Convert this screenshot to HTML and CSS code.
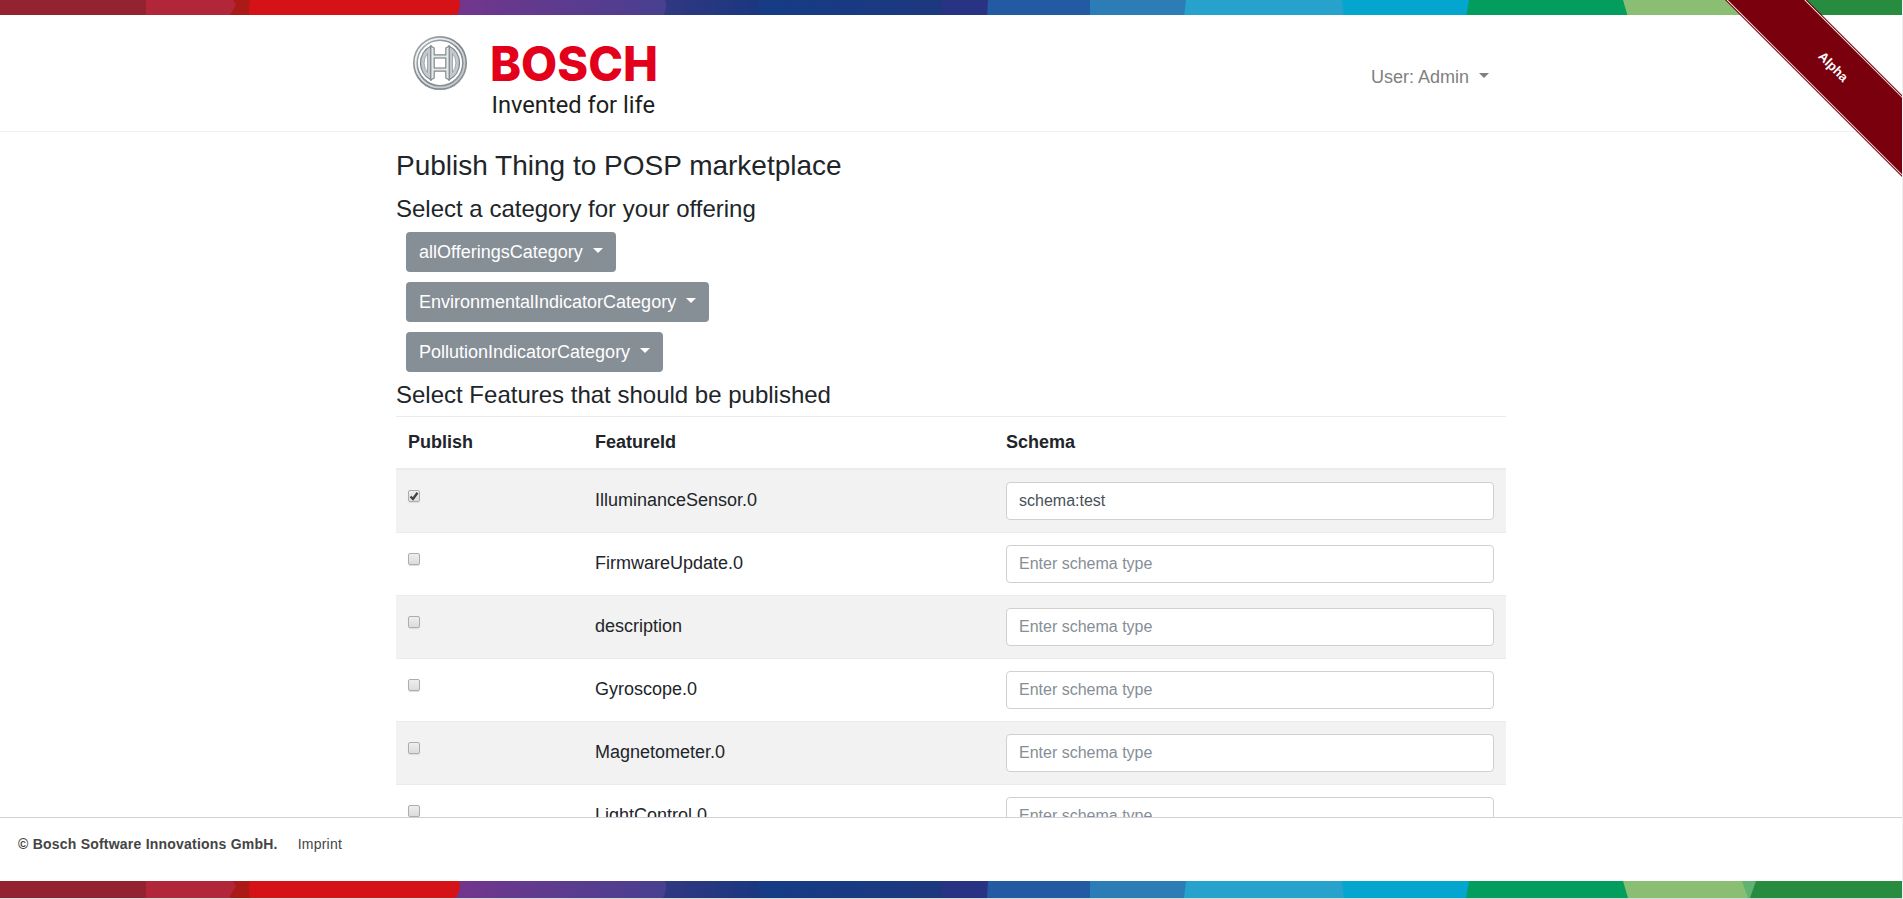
FILE: index.html
```html
<!DOCTYPE html>
<html lang="en">
<head>
<meta charset="utf-8">
<title>Publish Thing</title>
<link rel="stylesheet" href="styles.css">
</head>
<body>
<svg width="0" height="0" class="defs">
  <defs>
    <linearGradient id="violet"><stop offset="0" stop-color="#72368c"/><stop offset="1" stop-color="#474090"/></linearGradient>
    <linearGradient id="navy"><stop offset="0" stop-color="#303880"/><stop offset="1" stop-color="#193780"/></linearGradient>
    <linearGradient id="blue"><stop offset="0" stop-color="#153c85"/><stop offset="1" stop-color="#1d387f"/></linearGradient>
    <symbol id="stripe" viewBox="0 0 1903 17" preserveAspectRatio="none">
      <rect width="1903" height="17" fill="#942331"/>
      <rect x="146" width="100" height="17" fill="#b12739"/>
      <path d="M233 0L236 5L230 15V17H260V0Z" fill="#ac1a18"/>
      <rect x="455" width="215" height="17" fill="url(#violet)"/>
      <path d="M250 0H459Q462 6 456 17H250Q248 7 250 0Z" fill="#d51317"/>
      <path d="M665 0Q668 6 663 17H765V0Z" fill="url(#navy)"/>
      <path d="M759 0V10L762 17H942V0Z" fill="url(#blue)"/>
      <rect x="942" width="50" height="17" fill="#283383"/>
      <path d="M988 0L987 17H1095V0Z" fill="#225ba3"/>
      <rect x="1090" width="100" height="17" fill="#2c7db6"/>
      <path d="M1186 0L1184 17H1350V0Z" fill="#27a2cc"/>
      <path d="M1342 0L1344 17H1475V0Z" fill="#04a6d0"/>
      <path d="M1469 0L1466 17H1640V0Z" fill="#039e5d"/>
      <path d="M1623 0L1628 17H1760V0Z" fill="#8abf73"/>
      <path d="M1742 0L1748 17H1760V0Z" fill="#62b270"/>
      <path d="M1756 0L1750 17H1903V0Z" fill="#278c40"/>
    </symbol>
  </defs>
</svg>

<svg class="stripe" height="15"><use href="#stripe" width="1903" height="17"/></svg>

<header class="header">
  <div class="container header-row">
    <svg class="logo" width="270" height="110" viewBox="0 0 270 110">
      <defs>
        <linearGradient id="steel" x1="0" y1="0" x2="1" y2="1"><stop offset="0" stop-color="#a9b0b4"/><stop offset=".5" stop-color="#7d868b"/><stop offset="1" stop-color="#8f989d"/></linearGradient>
        <linearGradient id="shine" x1="0" y1="0" x2="1" y2="1"><stop offset="0" stop-color="#fff"/><stop offset="1" stop-color="#b4bbbf"/></linearGradient>
      </defs>
      <circle cx="44" cy="48" r="26.200" fill="url(#shine)" stroke="url(#steel)" stroke-width="1.700"/>
      <circle cx="44" cy="48" r="22.800" fill="#fff" stroke="url(#steel)" stroke-width="1.500"/>
      <path d="M35 31A19 19 0 0 0 35 65ZM53 31A19 19 0 0 1 53 65Z" fill="#c3c9cc" stroke="#7f898e" stroke-width="1.300"/>
      <path d="M31.500 38.500A15 15 0 0 0 31.500 57.500ZM56.500 38.500A15 15 0 0 1 56.500 57.500Z" fill="#fff" stroke="#929a9f" stroke-width=".8"/>
      <path d="M34.800 31L38.200 33V39.800H49.800V33L53.200 31V65L49.800 63V56.200H38.200V63L34.800 65Z" fill="#e6e9ea" stroke="#7f898e" stroke-width="1.200"/>
      <rect x="38.200" y="43" width="11.600" height="10" fill="#fff" stroke="#7f898e" stroke-width="1.200"/>
      <text x="94" y="65.500" class="brand" textLength="168" lengthAdjust="spacingAndGlyphs">BOSCH</text>
      <text x="95.500" y="98" class="claim" textLength="163.500" lengthAdjust="spacingAndGlyphs">Invented for life</text>
    </svg>
    <div class="user">User: Admin<span class="caret"></span></div>
  </div>
</header>

<main class="container">
  <h1>Publish Thing to POSP marketplace</h1>
  <h2>Select a category for your offering</h2>
  <div class="categories">
    <button class="btn">allOfferingsCategory<span class="caret"></span></button>
    <button class="btn">EnvironmentalIndicatorCategory<span class="caret"></span></button>
    <button class="btn">PollutionIndicatorCategory<span class="caret"></span></button>
  </div>
  <h2>Select Features that should be published</h2>
  <table class="table">
    <thead><tr><th class="col-publish">Publish</th><th class="col-feature">FeatureId</th><th>Schema</th></tr></thead>
    <tbody>
      <tr><td><span class="check"><svg width="10" height="10" viewBox="0 0 10 10"><path d="M1.500 5.500L4 8L8.500 1.800" fill="none" stroke="#424242" stroke-width="2.300"/></svg></span></td><td class="feature">IlluminanceSensor.0</td><td><input class="field" value="schema:test"></td></tr>
      <tr><td><span class="check"></span></td><td class="feature">FirmwareUpdate.0</td><td><input class="field" placeholder="Enter schema type"></td></tr>
      <tr><td><span class="check"></span></td><td class="feature">description</td><td><input class="field" placeholder="Enter schema type"></td></tr>
      <tr><td><span class="check"></span></td><td class="feature">Gyroscope.0</td><td><input class="field" placeholder="Enter schema type"></td></tr>
      <tr><td><span class="check"></span></td><td class="feature">Magnetometer.0</td><td><input class="field" placeholder="Enter schema type"></td></tr>
      <tr><td><span class="check"></span></td><td class="feature">LightControl.0</td><td><input class="field" placeholder="Enter schema type"></td></tr>
    </tbody>
  </table>
</main>

<footer class="footer">
  <div class="legal"><b>© Bosch Software Innovations GmbH.</b><span>Imprint</span></div>
  <svg class="stripe" height="17"><use href="#stripe" width="1903" height="17"/></svg>
</footer>

<div class="ribbon-box"><div class="ribbon"><span>Alpha</span></div></div>
</body>
</html>
```

FILE: styles.css
```css
* { box-sizing: border-box; }
html, body { height: 100%; }
body {
  margin: 0;
  overflow: hidden;
  display: flex;
  flex-direction: column;
  border-right: 1px solid #f0f0f0;
  background: #fff;
  color: #212529;
  font: 18px/27px "Liberation Sans", Arial, sans-serif;
}
.defs { position: absolute; }
.stripe { display: block; width: 100%; flex: none; }
.container { width: 1110px; margin: 0 auto; }
.header { height: 117px; flex: none; border-bottom: 1px solid #f0f0f0; }
.header-row { display: flex; justify-content: space-between; }
.logo { display: block; }
.brand { font: 800 48.5px Inter, "Open Sans", sans-serif; fill: #e2001a; }
.claim { font: 23px Roboto, sans-serif; fill: #1b1e20; }
.user { padding: 49px 17px 0 0; color: #808080; }
.caret {
  display: inline-block;
  margin-left: 10px;
  vertical-align: 5px;
  border: 5px solid transparent;
  border-top-color: currentColor;
  border-bottom: 0;
}
main { flex: 1; min-height: 0; overflow: hidden; }
h1, h2 { margin: 0; font-weight: 400; }
h1 { font-size: 28px; line-height: 31px; padding-top: 18px; margin-bottom: 15px; }
h2 { font-size: 24px; line-height: 26px; margin-bottom: 8px; }
.categories { display: flex; flex-direction: column; align-items: flex-start; gap: 10px; padding: 2px 10px 10px; }
.btn {
  height: 40px;
  padding: 0 13px;
  border: 0;
  border-radius: 4px;
  background: #868e96;
  color: #fff;
  font: 18px/38px "Liberation Sans", Arial, sans-serif;
}
.table { width: 100%; border-collapse: collapse; table-layout: fixed; }
.table th, .table td { padding: 12px; text-align: left; vertical-align: top; border-top: 1px solid #e9ecef; }
.table th { border-bottom: 2px solid #e9ecef; }
.table tbody tr { height: 63px; }
.table tbody tr:nth-child(odd) { background: #f2f2f2; }
.table .feature { padding: 17px 12px 0; }
.col-publish { width: 187px; }
.col-feature { width: 411px; }
.field {
  display: block;
  width: 100%;
  height: 38px;
  padding: 0 12px 1px;
  border: 1px solid #d0d0d0;
  border-radius: 4px;
  background: #fff;
  color: #495057;
  font: 16px "Liberation Sans", Arial, sans-serif;
}
.field::placeholder { color: #868e96; opacity: 1; }
.check {
  display: block;
  width: 12px;
  height: 12px;
  margin-top: 8px;
  border: 1px solid #adadad;
  border-radius: 2px;
  background: linear-gradient(#eee, #dcdcdc);
  box-shadow: 0 1px 1px #ddd;
}
.check svg { display: block; }
.footer {
  flex: none;
  height: 82px;
  display: flex;
  flex-direction: column;
  justify-content: space-between;
  border-top: 1px solid #d0d0d8;
  border-bottom: 1px solid #d8d8d8;
  background: #fff;
}
.legal { display: flex; gap: 20px; padding: 13px 18px; color: #444; font-size: 14px; letter-spacing: .22px; }
.ribbon-box { position: absolute; top: 0; right: 1px; width: 190px; height: 190px; overflow: hidden; }
.ribbon {
  position: absolute;
  left: -29px;
  top: 39px;
  width: 300px;
  height: 56px;
  transform: rotate(45deg);
  background: #7a000e;
  outline: 1px solid #7a000e;
  border: solid #fff;
  border-width: 1px 0;
  color: #fff;
  text-align: center;
  font: bold 13px/54px "Liberation Sans", Arial, sans-serif;
}
```
